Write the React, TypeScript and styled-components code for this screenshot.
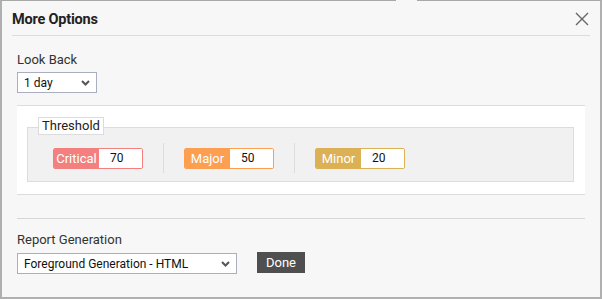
import React from "react";
import styled, { createGlobalStyle } from "styled-components";

const Global = createGlobalStyle`
  html, body { margin: 0; padding: 0; background: #ffffff; }
  body { font-family: Roboto, "Liberation Sans", Arial, sans-serif; }
  * { box-sizing: border-box; }
`;

const Dialog = styled.div`
  position: relative;
  width: 602px;
  height: 299px;
  background: #f7f7f7;
  border-top: 1px solid #a8a8a8;
  border-left: 2px solid #b0b0b0;
  border-right: 2px solid #b0b0b0;
  border-bottom: 2px solid #b0b0b0;
  display: flex;
  flex-direction: column;
`;

const Notch = styled.div`
  position: absolute;
  top: -1px;
  left: 394px;
  width: 21px;
  height: 2px;
  background: #f7f7f7;
`;

const Header = styled.div`
  height: 35px;
  margin: 0 10px 0 10px;
  padding-top: 3px;
  border-bottom: 1px solid #dcdcdc;
  display: flex;
  align-items: center;
  justify-content: space-between;
`;

const Title = styled.h1`
  margin: 0;
  font-size: 14.5px;
  font-weight: 700;
  color: #222;
  letter-spacing: -0.2px;
`;

const CloseBtn = styled.button`
  border: 0;
  background: transparent;
  padding: 0;
  width: 15px;
  height: 15px;
  display: flex;
  align-items: center;
  justify-content: center;
  margin-top: -1px;
  margin-right: 1px;
  cursor: pointer;
`;

const Body = styled.div`
  padding: 16px 15px 0 15px;
  display: flex;
  flex-direction: column;
`;

const Label = styled.div<{ $mt?: number }>`
  font-size: 13px;
  line-height: 16px;
  color: #333;
  margin-top: ${(p) => p.$mt ?? 0}px;
`;

const SelectBox = styled.div<{ $w: number; $mt: number }>`
  margin-top: ${(p) => p.$mt}px;
  width: ${(p) => p.$w}px;
  height: 21px;
  background: #fff;
  border: 1px solid #a9afbe;
  display: flex;
  align-items: center;
  justify-content: space-between;
  padding: 0 6px 0 6px;
  font-size: 12px;
  color: #111;
`;

const Panel = styled.div`
  margin-top: 12px;
  background: #fff;
  border-top: 1px solid #dcdcdc;
  border-bottom: 1px solid #dcdcdc;
  padding: 21px 11px 12px 10px;
`;

const Group = styled.div`
  position: relative;
  background: #f1f1f1;
  border: 1px solid #dcdcdc;
  padding: 15px 25px 8px 25px;
`;

const Legend = styled.div`
  position: absolute;
  top: -11px;
  left: 10px;
  height: 18px;
  padding: 0 3px;
  background: #fff;
  border: 1px solid #dcdcdc;
  font-size: 13px;
  line-height: 16px;
  color: #222;
`;

const Row = styled.div`
  display: flex;
  align-items: center;
  gap: 20px;
`;

const Divider = styled.div`
  width: 1px;
  height: 30px;
  background: #dcdcdc;
`;

const Badge = styled.div<{ $c: string }>`
  display: flex;
  height: 21px;
  border: 1px solid ${(p) => p.$c};
  border-radius: 2px;
  overflow: hidden;
`;

const BadgeLabel = styled.div<{ $c: string }>`
  width: 45px;
  background: ${(p) => p.$c};
  color: #fff;
  font-size: 13px;
  display: flex;
  align-items: center;
  justify-content: center;
`;

const BadgeValue = styled.div`
  width: 43px;
  background: #fff;
  font-size: 12px;
  color: #111;
  display: flex;
  align-items: center;
  padding-left: 11px;
`;

const Separator = styled.div`
  margin-top: 23px;
  height: 1px;
  background: #d6d6d6;
  width: 568px;
`;

const Actions = styled.div`
  display: flex;
  align-items: flex-start;
  gap: 20px;
`;

const DoneBtn = styled.button`
  margin-top: 4px;
  height: 21px;
  width: 48px;
  border: 0;
  background: #4f4f4f;
  color: #fff;
  font-family: inherit;
  font-size: 13px;
  padding: 0;
`;

const Chevron = () => (
  <svg width="9" height="6" viewBox="0 0 9 6">
    <polyline points="1,1 4.5,4.5 8,1" fill="none" stroke="#555" strokeWidth="2" />
  </svg>
);

const levels = [
  { name: "Critical", value: "70", color: "#f47f7f" },
  { name: "Major", value: "50", color: "#fc9f50" },
  { name: "Minor", value: "20", color: "#dcb156" },
];

export default function App() {
  return (
    <>
      <Global />
      <Dialog>
        <Notch />
        <Header>
          <Title>More Options</Title>
          <CloseBtn aria-label="close">
            <svg width="14" height="14" viewBox="0 0 14 14">
              <path d="M1 1 L13 13 M13 1 L1 13" stroke="#666" strokeWidth="1.4" />
            </svg>
          </CloseBtn>
        </Header>
        <Body>
          <Label $mt={0}>Look Back</Label>
          <SelectBox $w={80} $mt={4}>
            <span>1 day</span>
            <Chevron />
          </SelectBox>
          <Panel>
            <Group>
              <Legend>Threshold</Legend>
              <Row>
                {levels.map((l, i) => (
                  <React.Fragment key={l.name}>
                    {i > 0 && <Divider />}
                    <Badge $c={l.color}>
                      <BadgeLabel $c={l.color}>{l.name}</BadgeLabel>
                      <BadgeValue>{l.value}</BadgeValue>
                    </Badge>
                  </React.Fragment>
                ))}
              </Row>
            </Group>
          </Panel>
          <Separator />
          <Label $mt={13}>Report Generation</Label>
          <Actions>
            <SelectBox $w={220} $mt={5}>
              <span>Foreground Generation - HTML</span>
              <Chevron />
            </SelectBox>
            <DoneBtn>Done</DoneBtn>
          </Actions>
        </Body>
      </Dialog>
    </>
  );
}
